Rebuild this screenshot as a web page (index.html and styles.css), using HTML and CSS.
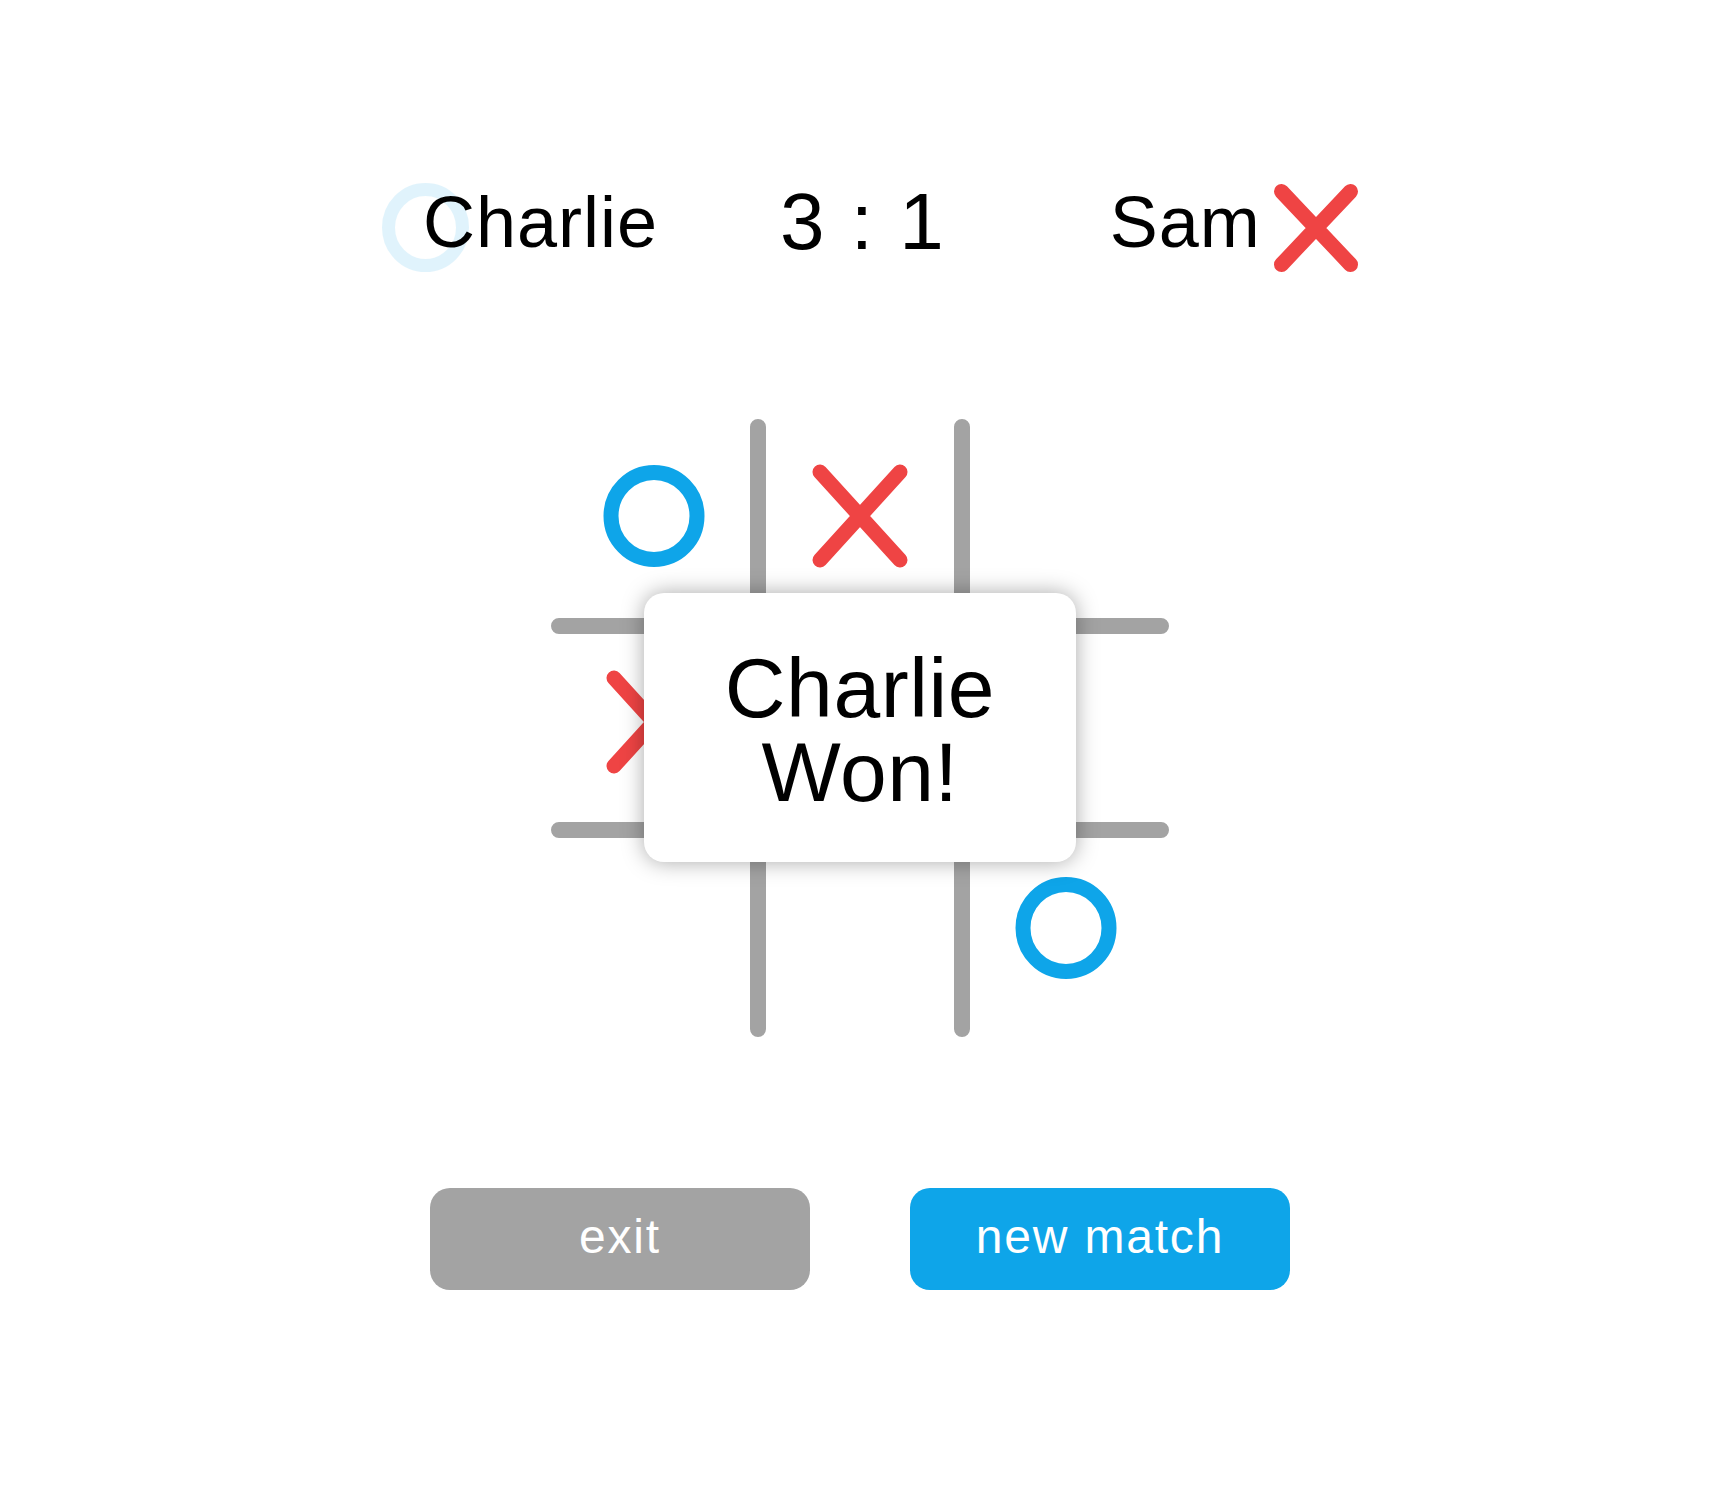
FILE: index.html
```
<!DOCTYPE html>
<html lang="en">
<head>
<meta charset="utf-8">
<title>Tic Tac Toe</title>
<link rel="stylesheet" href="styles.css">
</head>
<body>
<main class="page">
  <header class="scoreboard">
    <div class="player player-left">
      <svg class="turn-o" width="87" height="89" viewBox="0 0 87 89" aria-hidden="true"><ellipse cx="43.5" cy="44.5" rx="37" ry="38" fill="none" stroke="#0ea5e9" stroke-width="13"/></svg>
      <span class="name">Charlie</span>
    </div>
    <div class="score">3 : 1</div>
    <div class="player player-right">
      <span class="name">Sam</span>
      <svg class="head-x" width="84" height="88" viewBox="0 0 84 88" aria-hidden="true"><path d="M7.5 7.5 L76.5 80.5 M76.5 7.5 L7.5 80.5" fill="none" stroke="#ef4444" stroke-width="15" stroke-linecap="round"/></svg>
    </div>
  </header>

  <section class="board">
    <svg class="grid-lines" width="618" height="618" viewBox="0 0 618 618" aria-hidden="true">
      <path d="M207 8 V610 M411 8 V610 M8 207 H610 M8 411 H610" fill="none" stroke="#a3a3a3" stroke-width="16" stroke-linecap="round"/>
    </svg>
    <div class="cells">
      <div class="cell"><svg class="mark" width="102" height="102" viewBox="0 0 102 102"><ellipse cx="51" cy="51" rx="43" ry="43.5" fill="none" stroke="#0ea5e9" stroke-width="15"/></svg></div>
      <div class="cell"><svg class="mark" width="96" height="104" viewBox="0 0 96 104"><path d="M8 8 L88 96 M88 8 L8 96" fill="none" stroke="#ef4444" stroke-width="15" stroke-linecap="round"/></svg></div>
      <div class="cell"></div>
      <div class="cell"><svg class="mark" width="96" height="104" viewBox="0 0 96 104"><path d="M8 8 L88 96 M88 8 L8 96" fill="none" stroke="#ef4444" stroke-width="15" stroke-linecap="round"/></svg></div>
      <div class="cell"></div>
      <div class="cell"></div>
      <div class="cell"></div>
      <div class="cell"></div>
      <div class="cell"><svg class="mark" width="102" height="102" viewBox="0 0 102 102"><ellipse cx="51" cy="51" rx="43" ry="43.5" fill="none" stroke="#0ea5e9" stroke-width="15"/></svg></div>
    </div>
    <div class="result-card">
      <p class="result-line">Charlie</p>
      <p class="result-line">Won!</p>
    </div>
  </section>

  <div class="actions">
    <button class="btn btn-exit" type="button">exit</button>
    <button class="btn btn-new" type="button">new match</button>
  </div>
</main>
</body>
</html>
```
FILE: styles.css
```
html, body {
  margin: 0;
  padding: 0;
  background: #ffffff;
}

body {
  font-family: "Liberation Sans", Arial, sans-serif;
  color: #000000;
}

.page {
  padding-top: 172px;
}

.scoreboard {
  height: 100px;
  display: flex;
  align-items: center;
  padding-left: 423px;
}

.player {
  display: flex;
  align-items: center;
}

.player-left {
  position: relative;
}

.name {
  position: relative;
  font-size: 72px;
  line-height: 1;
  letter-spacing: 1px;
  white-space: nowrap;
}

.turn-o {
  position: absolute;
  left: -41px;
  top: -3px;
  opacity: 0.12;
}

.score {
  margin-left: 122px;
  font-size: 80px;
  line-height: 1;
  word-spacing: 4px;
  white-space: nowrap;
}

.player-right {
  margin-left: 166px;
}

.head-x {
  margin-left: 13px;
  margin-top: 12px;
  display: block;
}

.board {
  position: relative;
  width: 618px;
  height: 618px;
  margin: 147px auto 0;
}

.grid-lines {
  position: absolute;
  left: 0;
  top: 0;
}

.cells {
  position: relative;
  display: grid;
  grid-template-columns: repeat(3, 206px);
  grid-template-rows: repeat(3, 206px);
}

.cell {
  display: flex;
  align-items: center;
  justify-content: center;
  padding-bottom: 12px;
  box-sizing: border-box;
}

.mark {
  display: block;
}

.result-card {
  position: absolute;
  left: 93px;
  top: 174px;
  width: 432px;
  height: 269px;
  box-sizing: border-box;
  padding-top: 53px;
  display: flex;
  flex-direction: column;
  align-items: center;
  background: #ffffff;
  border-radius: 20px;
  box-shadow: 0 0 22px rgba(0, 0, 0, 0.34);
}

.result-line {
  margin: 0;
  font-size: 84px;
  line-height: 84px;
  height: 84px;
  letter-spacing: 0.6px;
  text-align: center;
  white-space: nowrap;
}

.actions {
  display: flex;
  justify-content: center;
  gap: 100px;
  margin-top: 151px;
}

.btn {
  width: 380px;
  height: 102px;
  border: none;
  border-radius: 20px;
  font-family: "Liberation Sans", Arial, sans-serif;
  font-size: 48px;
  line-height: 1;
  letter-spacing: 1.8px;
  color: #ffffff;
  padding: 0 0 4px;
  cursor: pointer;
}

.btn-exit {
  background: #a3a3a3;
}

.btn-new {
  background: #0ea5e9;
}
```
